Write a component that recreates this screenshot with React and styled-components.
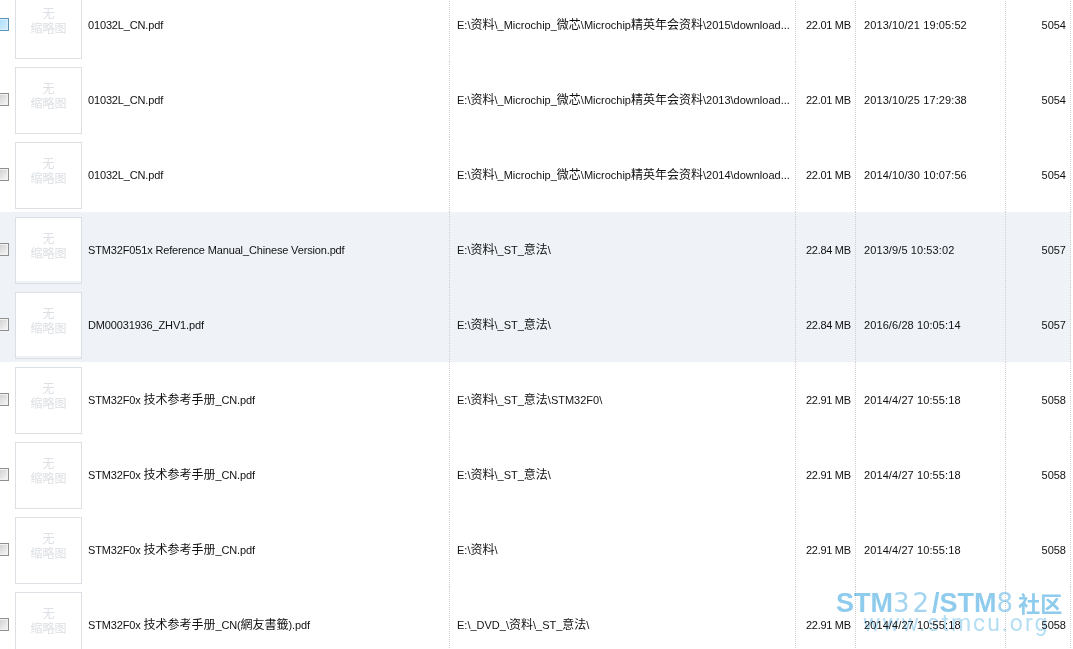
import React from 'react';
import styled, { createGlobalStyle } from 'styled-components';

const GlobalStyle = createGlobalStyle`
    html, body {
        margin: 0;
        padding: 0;
        background: #fff;
    }
`;

const Page = styled.div`
    position: relative;
    width: 1073px;
    height: 649px;
    overflow: hidden;
    font-family: "Liberation Sans", "Noto Sans CJK SC", sans-serif;
    font-size: 11px;
    color: #111;
`;

const List = styled.ul`
    list-style: none;
    margin: -13px 2px 0 0;
    padding: 0;
`;

const Row = styled.li`
    display: grid;
    grid-template-columns: 450px 346px 60px 150px 1fr;
    height: 75px;
    background: ${props => (props.$shaded ? '#eff3f8' : '#fff')};
`;

const Cell = styled.div`
    display: flex;
    align-items: center;
    height: 100%;
    box-sizing: border-box;
    padding: 0 8px;
    border-right: 1px dotted #cfcfcf;
    white-space: nowrap;
    overflow: hidden;
`;

const NameCell = styled(Cell)`
    padding: 0;
    letter-spacing: -0.15px;
`;

const PathCell = styled(Cell)`
    padding: 0 0 0 7px;
`;

const SizeCell = styled(Cell)`
    padding: 0 0 0 10px;
    letter-spacing: -0.3px;
`;

const DateCell = styled(Cell)`
    letter-spacing: 0.1px;
`;

const IdCell = styled(Cell)`
    justify-content: flex-end;
    padding: 0 4px 0 0;
`;

const Line = styled.span`
    display: block;
    padding-top: 2px;
    line-height: 15px;
`;

const Han = styled.span`
    font-size: 12px;
    line-height: 0;
    letter-spacing: 0;
`;

const Check = styled.span`
    flex: none;
    width: 13px;
    height: 13px;
    margin-left: -4px;
    box-sizing: border-box;
    border: 1px solid ${props => (props.$hover ? '#5b93b5' : '#8e8f8f')};
    background: ${props => (props.$hover
        ? 'linear-gradient(135deg, #a6dcfd, #d8f0ff)'
        : 'linear-gradient(135deg, #cbcbcb, #f8f8f8)')};
    box-shadow: inset 0 0 0 1px ${props => (props.$hover ? '#dcefff' : '#f2f2f2')};
`;

const Thumb = styled.div`
    flex: none;
    display: flex;
    align-items: center;
    justify-content: center;
    width: 67px;
    height: 67px;
    margin: 2px 6px 0 6px;
    padding-bottom: 7px;
    box-sizing: border-box;
    border: 1px solid #dce0e4;
    background: linear-gradient(#fff calc(100% - 2px), transparent calc(100% - 2px));
    color: #dcdfe3;
    font-size: 12px;
    letter-spacing: 0;
    line-height: 15px;
    text-align: center;
`;

const Watermark = styled.div`
    position: absolute;
    left: 836px;
    top: 588px;
    width: 237px;
    color: #8ecbec;
    mix-blend-mode: multiply;
    pointer-events: none;
    font-family: "Liberation Sans", "Noto Sans CJK SC", sans-serif;
`;

const Brand = styled.div`
    font-size: 27px;
    font-weight: 700;
    line-height: 30px;
    white-space: nowrap;
`;

const Thin = styled.span`
    font-family: "DejaVu Sans", sans-serif;
    font-size: 26px;
    font-weight: 400;
    letter-spacing: 3px;
    color: #a3d5f0;
`;

const BrandHan = styled.span`
    margin-left: 2px;
    font-size: 22px;
`;

const Site = styled.div`
    margin-top: -9px;
    padding-left: 27px;
    font-family: Roboto, sans-serif;
    font-size: 23px;
    font-weight: 400;
    letter-spacing: 2px;
    line-height: 26px;
    color: #b5def4;
    white-space: nowrap;
`;

const files = [
    { name: '01032L_CN.pdf', path: 'E:\\资料\\_Microchip_微芯\\Microchip精英年会资料\\2015\\download...', size: '22.01 MB', date: '2013/10/21 19:05:52', id: 5054, hover: true },
    { name: '01032L_CN.pdf', path: 'E:\\资料\\_Microchip_微芯\\Microchip精英年会资料\\2013\\download...', size: '22.01 MB', date: '2013/10/25 17:29:38', id: 5054 },
    { name: '01032L_CN.pdf', path: 'E:\\资料\\_Microchip_微芯\\Microchip精英年会资料\\2014\\download...', size: '22.01 MB', date: '2014/10/30 10:07:56', id: 5054 },
    { name: 'STM32F051x Reference Manual_Chinese Version.pdf', path: 'E:\\资料\\_ST_意法\\', size: '22.84 MB', date: '2013/9/5 10:53:02', id: 5057, shaded: true },
    { name: 'DM00031936_ZHV1.pdf', path: 'E:\\资料\\_ST_意法\\', size: '22.84 MB', date: '2016/6/28 10:05:14', id: 5057, shaded: true },
    { name: 'STM32F0x 技术参考手册_CN.pdf', path: 'E:\\资料\\_ST_意法\\STM32F0\\', size: '22.91 MB', date: '2014/4/27 10:55:18', id: 5058 },
    { name: 'STM32F0x 技术参考手册_CN.pdf', path: 'E:\\资料\\_ST_意法\\', size: '22.91 MB', date: '2014/4/27 10:55:18', id: 5058 },
    { name: 'STM32F0x 技术参考手册_CN.pdf', path: 'E:\\资料\\', size: '22.91 MB', date: '2014/4/27 10:55:18', id: 5058 },
    { name: 'STM32F0x 技术参考手册_CN(網友書籤).pdf', path: 'E:\\_DVD_\\资料\\_ST_意法\\', size: '22.91 MB', date: '2014/4/27 10:55:18', id: 5058 },
];

// the chinese parts of a file name sit a pixel larger than the latin ones
const Mixed = ({ text }) => (
    <Line>
        {text.split(/([\u4e00-\u9fff]+)/).map((part, i) => (i % 2 ? <Han key={i}>{part}</Han> : part))}
    </Line>
);

const App = () => {
    return (
        <Page>
            <GlobalStyle />
            <List>
                {files.map((file, i) => (
                    <Row key={i} $shaded={file.shaded}>
                        <NameCell>
                            <Check $hover={file.hover} />
                            <Thumb><div>无<br />缩略图</div></Thumb>
                            <Mixed text={file.name} />
                        </NameCell>
                        <PathCell><Mixed text={file.path} /></PathCell>
                        <SizeCell>{file.size}</SizeCell>
                        <DateCell>{file.date}</DateCell>
                        <IdCell>{file.id}</IdCell>
                    </Row>
                ))}
            </List>
            <Watermark>
                <Brand>STM<Thin>32</Thin>/STM<Thin>8</Thin><BrandHan>社区</BrandHan></Brand>
                <Site>www.stmcu.org</Site>
            </Watermark>
        </Page>
    );
};

export default App;
